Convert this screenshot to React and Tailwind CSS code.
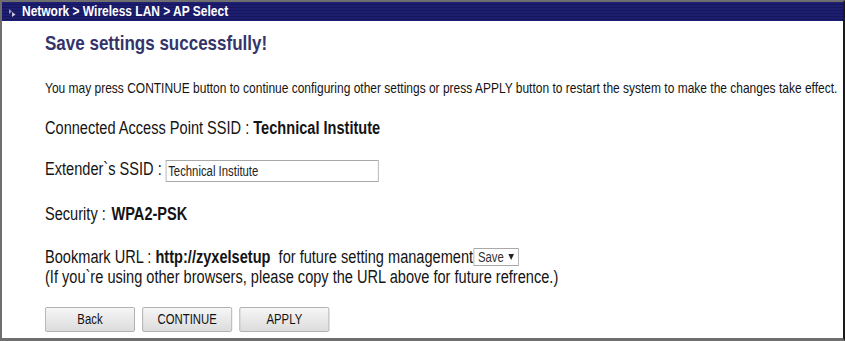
const FONT = { fontFamily: "'Liberation Sans', Arial, sans-serif" };

function HeaderBar() {
  return (
    <div className="flex h-[19px] items-center bg-[repeating-linear-gradient(180deg,#1e1e70_0px,#1e1e70_2px,#16165f_2px,#16165f_3px)] pl-[6px]">
      <svg width="9" height="10" viewBox="0 0 9 10" className="mr-[5px] mt-[2px] shrink-0">
        <path d="M1 1 L4 3.5 L1 6 Z" fill="#9a9ab8" />
        <path d="M4 4 L7.5 6.5 L4 9 Z" fill="#c8c8d8" />
      </svg>
      <span className="origin-left scale-x-[0.855] whitespace-nowrap text-[14px] font-bold leading-[19px] text-white">
        Network &gt; Wireless LAN &gt; AP Select
      </span>
    </div>
  );
}

function Btn({ children }) {
  return (
    <button className="h-[25px] w-[111px] rounded-[2px] border border-[#a8a8a8] bg-gradient-to-b from-[#f6f6f6] to-[#dcdcdc] text-[14px] leading-[23px] text-[#111]">
      {children}
    </button>
  );
}

export default function App() {
  return (
    <div style={FONT} className="h-[341px] w-[845px] overflow-hidden bg-white">
      <div className="flex h-[341px] w-[845px] flex-col border-b-[3px] border-l-2 border-t-2 border-r-2 border-[#6e6e6e] border-r-[#1a1a1a]">
        <HeaderBar />
        <div className="pl-[43px]">
          <div className="origin-left scale-x-[0.81] whitespace-nowrap text-[#141414]">
            <h1 className="mt-[10px] text-[21px] font-bold leading-[24px] text-[#34346a]">Save settings successfully!</h1>
            <p className="mt-[23px] text-[14.8px] leading-[20px]">
              You may press CONTINUE button to continue configuring other settings or press APPLY button to restart the system to make the changes take effect.
            </p>
            <div className="mt-[18px] text-[18px] leading-[24px]">
              Connected Access Point SSID : <span className="font-bold">Technical Institute</span>
            </div>
            <div className="mt-[18px] flex items-start text-[18px] leading-[22px]">
              <span>Extender`s SSID :&nbsp;</span>
              <input
                readOnly
                value="Technical Institute"
                style={FONT}
                className="mt-[2px] h-[22px] w-[263px] border border-[#a9a9a9] px-[2px] text-[14px] text-[#222] outline-none"
              />
            </div>
            <div className="mt-[20px] text-[18px] leading-[24px]">
              Security : <span className="ml-[2px] font-bold">WPA2-PSK</span>
            </div>
            <div className="mt-[21px] flex items-end text-[18px] leading-[20px]">
              <span>
                Bookmark URL : <span className="font-bold">http://zyxelsetup</span>&nbsp; for future setting management
              </span>
              <span className="mb-[1px] flex h-[18px] items-center gap-[6px] border border-[#a9a9a9] px-[5px] text-[14px] leading-[16px] text-[#333]">
                Save
                <svg width="7" height="6" viewBox="0 0 7 6"><path d="M0 0 H7 L3.5 6 Z" fill="#222" /></svg>
              </span>
            </div>
            <div className="text-[18px] leading-[20px]">
              (If you`re using other browsers, please copy the URL above for future refrence.)
            </div>
            <div className="mt-[20px] flex gap-[9px]">
              <Btn>Back</Btn>
              <Btn>CONTINUE</Btn>
              <Btn>APPLY</Btn>
            </div>
          </div>
        </div>
      </div>
    </div>
  );
}
